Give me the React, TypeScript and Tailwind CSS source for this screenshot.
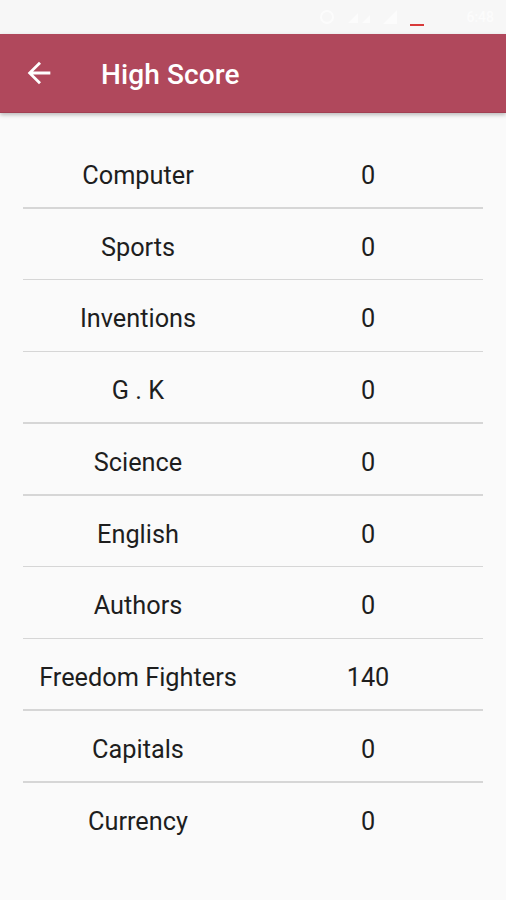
import React from "react";

const rows: [string, string][] = [
  ["Computer", "0"],
  ["Sports", "0"],
  ["Inventions", "0"],
  ["G . K", "0"],
  ["Science", "0"],
  ["English", "0"],
  ["Authors", "0"],
  ["Freedom Fighters", "140"],
  ["Capitals", "0"],
  ["Currency", "0"],
];

export default function App() {
  return (
    <div
      className="w-[506px] h-[900px] bg-[#fafafa] overflow-hidden flex flex-col"
      style={{ fontFamily: "Roboto, 'Noto Sans', sans-serif" }}
    >
      {/* status bar */}
      <div className="h-[34px] bg-[#f7f7f7] flex items-center justify-end pr-[12px] gap-[10px] shrink-0">
        <svg width="18" height="16" viewBox="0 0 18 16">
          <circle cx="9" cy="8" r="6" fill="none" stroke="#fcfcfc" strokeWidth="2" />
        </svg>
        <svg width="26" height="16" viewBox="0 0 26 16">
          <path d="M2 14 L12 4 L12 14 Z" fill="#fcfcfc" />
          <path d="M16 14 L24 6 L24 14 Z" fill="#fcfcfc" />
        </svg>
        <svg width="16" height="16" viewBox="0 0 16 16">
          <path d="M1 15 L15 1 L15 15 Z" fill="#fcfcfc" />
        </svg>
        <div className="w-[14px] h-[2px] bg-[#d83a3a] mt-[16px] mx-[2px]" />
        <div className="w-[20px]" />
        <span className="text-[14px] text-[#fcfcfc] font-medium">6:48</span>
      </div>

      {/* app bar */}
      <div className="h-[79px] bg-[#b0485c] flex items-center shrink-0 shadow-[0_2px_4px_rgba(0,0,0,0.25)] relative z-10 border-b border-[#a13f52]">
        <div className="ml-[22px] w-[34px] h-[34px] flex items-center justify-center">
          <svg width="34" height="34" viewBox="0 0 24 24">
            <path
              d="M20 11H7.83l5.59-5.59L12 4l-8 8 8 8 1.41-1.41L7.83 13H20v-2z"
              fill="#ffffff"
            />
          </svg>
        </div>
        <span className="ml-[45px] mt-[3px] text-white text-[28px] font-medium leading-none tracking-[0.1px]">
          High Score
        </span>
      </div>

      {/* list */}
      <div className="px-[23px] pt-[31px] flex flex-col">
        {rows.map(([name, score], i) => (
          <div key={name} className="flex flex-col">
            <div className="h-[63px] grid grid-cols-2 items-center text-[25.3px] text-[#1e1e1e] leading-none">
              <span className="text-center">{name}</span>
              <span className="text-center">{score}</span>
            </div>
            {i < rows.length - 1 && (
              <div className="h-[1.5px] bg-[#d6d6d6] mb-[7.25px]" />
            )}
          </div>
        ))}
      </div>
    </div>
  );
}
